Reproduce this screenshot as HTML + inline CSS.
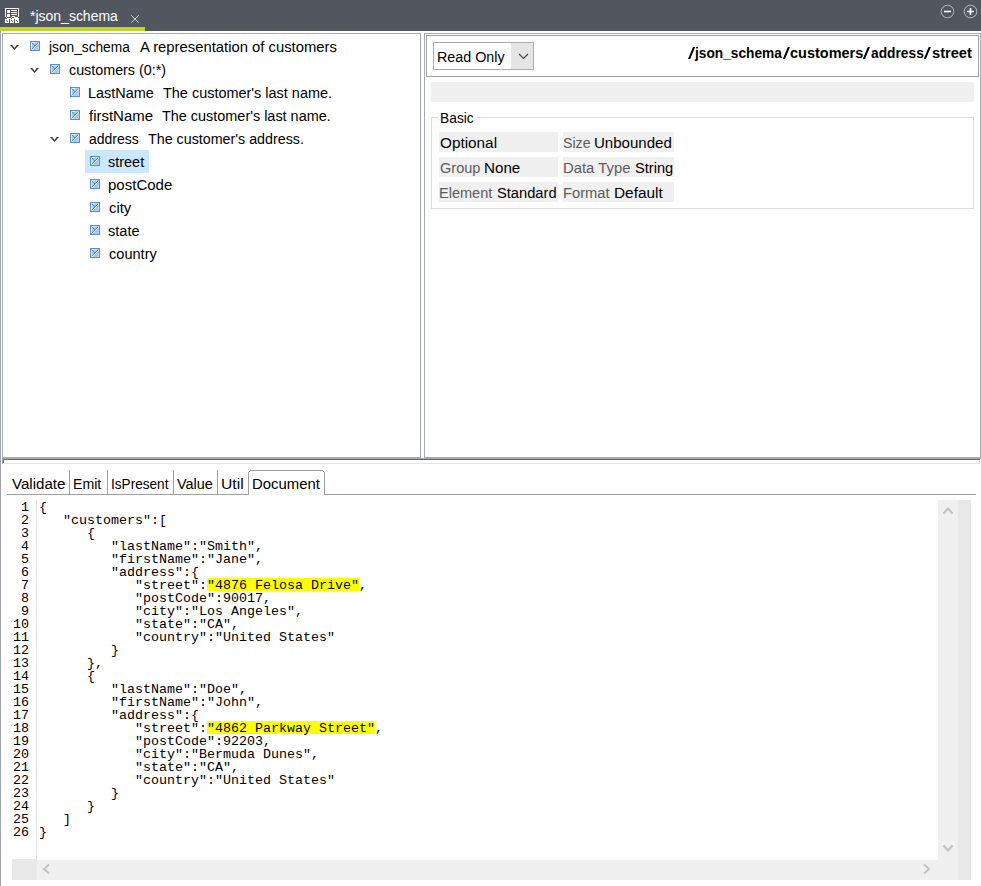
<!DOCTYPE html>
<html><head><meta charset="utf-8"><style>
html,body{margin:0;padding:0;width:981px;height:886px;overflow:hidden;background:#fff}
.b{position:absolute;box-sizing:border-box}
.t{position:absolute;white-space:pre;font-family:'Liberation Sans', sans-serif;line-height:20px;transform-origin:0 0}
.m{position:absolute;margin:0;font-family:'Liberation Mono',monospace;font-size:13.333px;line-height:13px;color:#000}
.hl{-webkit-text-stroke-color:#ff0}
</style></head><body>
<svg width="0" height="0" style="position:absolute"><defs><g id="ic"><path fill="#5e8ecb" d="M0 0h1v1h-1zM1 0h1v1h-1zM2 0h1v1h-1zM3 0h1v1h-1zM4 0h1v1h-1zM5 0h1v1h-1zM6 0h1v1h-1zM7 0h1v1h-1zM8 0h1v1h-1zM9 0h1v1h-1zM0 1h1v1h-1zM9 1h1v1h-1zM0 2h1v1h-1zM9 2h1v1h-1zM0 3h1v1h-1zM9 3h1v1h-1zM0 4h1v1h-1zM9 4h1v1h-1zM0 5h1v1h-1zM9 5h1v1h-1zM0 6h1v1h-1zM9 6h1v1h-1zM0 7h1v1h-1zM9 7h1v1h-1zM0 8h1v1h-1zM9 8h1v1h-1zM0 9h1v1h-1zM1 9h1v1h-1zM2 9h1v1h-1zM3 9h1v1h-1zM4 9h1v1h-1zM5 9h1v1h-1zM6 9h1v1h-1zM7 9h1v1h-1zM8 9h1v1h-1zM9 9h1v1h-1z"/><path fill="#9fcbfa" d="M1 1h1v1h-1zM8 1h1v1h-1zM3 2h1v1h-1zM4 2h1v1h-1zM5 2h1v1h-1zM2 3h1v1h-1zM4 3h1v1h-1zM2 4h1v1h-1zM3 4h1v1h-1zM7 4h1v1h-1zM2 5h1v1h-1zM6 5h1v1h-1zM7 5h1v1h-1zM5 6h1v1h-1zM6 6h1v1h-1zM7 6h1v1h-1zM4 7h1v1h-1zM5 7h1v1h-1zM6 7h1v1h-1zM7 7h1v1h-1zM1 8h1v1h-1z"/><path fill="#c8fbf6" d="M2 1h1v1h-1zM3 1h1v1h-1zM4 1h1v1h-1zM1 2h1v1h-1zM1 3h1v1h-1zM1 4h1v1h-1zM1 5h1v1h-1zM1 6h1v1h-1zM1 7h1v1h-1z"/><path fill="#d2c6f8" d="M5 1h1v1h-1zM6 1h1v1h-1zM8 3h1v1h-1zM8 4h1v1h-1zM8 5h1v1h-1zM8 6h1v1h-1zM8 7h1v1h-1zM8 8h1v1h-1z"/><path fill="#a6d4c8" d="M7 1h1v1h-1zM6 2h1v1h-1zM5 3h1v1h-1zM3 5h1v1h-1zM2 6h1v1h-1zM3 8h1v1h-1zM4 8h1v1h-1zM5 8h1v1h-1zM6 8h1v1h-1zM7 8h1v1h-1z"/><path fill="#5a87c6" d="M2 2h1v1h-1zM7 2h1v1h-1zM3 3h1v1h-1zM6 3h1v1h-1zM4 4h1v1h-1zM5 4h1v1h-1zM4 5h1v1h-1zM3 6h1v1h-1zM2 7h1v1h-1z"/><path fill="#d6fffb" d="M8 2h1v1h-1zM7 3h1v1h-1zM6 4h1v1h-1zM5 5h1v1h-1zM4 6h1v1h-1zM3 7h1v1h-1zM2 8h1v1h-1z"/></g></defs></svg>
<div class="b" style="left:0px;top:0px;width:981px;height:31px;background:#52565f;"></div>
<div class="b" style="left:0px;top:27px;width:145px;height:4px;background:#bdd52b;"></div>
<svg class="b" style="left:5px;top:8px" width="14" height="15" shape-rendering="crispEdges"><path fill="#fff" d="M0 0h1v1h-1zM1 0h1v1h-1zM2 0h1v1h-1zM3 0h1v1h-1zM4 0h1v1h-1zM5 0h1v1h-1zM6 0h1v1h-1zM7 0h1v1h-1zM8 0h1v1h-1zM9 0h1v1h-1zM10 0h1v1h-1zM11 0h1v1h-1zM12 0h1v1h-1zM13 0h1v1h-1zM0 1h1v1h-1zM13 1h1v1h-1zM0 2h1v1h-1zM2 2h1v1h-1zM3 2h1v1h-1zM4 2h1v1h-1zM6 2h1v1h-1zM7 2h1v1h-1zM8 2h1v1h-1zM9 2h1v1h-1zM10 2h1v1h-1zM11 2h1v1h-1zM13 2h1v1h-1zM0 3h1v1h-1zM2 3h1v1h-1zM3 3h1v1h-1zM4 3h1v1h-1zM13 3h1v1h-1zM0 4h1v1h-1zM2 4h1v1h-1zM3 4h1v1h-1zM4 4h1v1h-1zM6 4h1v1h-1zM7 4h1v1h-1zM8 4h1v1h-1zM9 4h1v1h-1zM10 4h1v1h-1zM11 4h1v1h-1zM13 4h1v1h-1zM0 5h1v1h-1zM13 5h1v1h-1zM0 6h1v1h-1zM2 6h1v1h-1zM3 6h1v1h-1zM4 6h1v1h-1zM6 6h1v1h-1zM7 6h1v1h-1zM8 6h1v1h-1zM9 6h1v1h-1zM10 6h1v1h-1zM11 6h1v1h-1zM13 6h1v1h-1zM0 7h1v1h-1zM2 7h1v1h-1zM3 7h1v1h-1zM4 7h1v1h-1zM13 7h1v1h-1zM0 8h1v1h-1zM2 8h1v1h-1zM3 8h1v1h-1zM4 8h1v1h-1zM7 8h1v1h-1zM8 8h1v1h-1zM9 8h1v1h-1zM13 8h1v1h-1zM1 9h1v1h-1zM6 9h1v1h-1zM9 9h1v1h-1zM10 9h1v1h-1zM11 9h1v1h-1zM12 9h1v1h-1zM2 10h1v1h-1zM3 10h1v1h-1zM4 10h1v1h-1zM5 10h1v1h-1zM7 10h1v1h-1zM8 10h1v1h-1zM9 10h1v1h-1zM10 10h1v1h-1zM11 10h1v1h-1zM12 10h1v1h-1zM13 10h1v1h-1zM0 11h1v1h-1zM1 11h1v1h-1zM2 11h1v1h-1zM3 11h1v1h-1zM5 11h1v1h-1zM6 11h1v1h-1zM7 11h1v1h-1zM8 11h1v1h-1zM10 11h1v1h-1zM11 11h1v1h-1zM12 11h1v1h-1zM13 11h1v1h-1zM0 12h1v1h-1zM2 12h1v1h-1zM3 12h1v1h-1zM5 12h1v1h-1zM7 12h1v1h-1zM8 12h1v1h-1zM10 12h1v1h-1zM12 12h1v1h-1zM13 12h1v1h-1zM0 13h1v1h-1zM1 13h1v1h-1zM3 13h1v1h-1zM5 13h1v1h-1zM6 13h1v1h-1zM8 13h1v1h-1zM10 13h1v1h-1zM11 13h1v1h-1zM13 13h1v1h-1zM0 14h1v1h-1zM1 14h1v1h-1zM2 14h1v1h-1zM3 14h1v1h-1zM5 14h1v1h-1zM6 14h1v1h-1zM7 14h1v1h-1zM8 14h1v1h-1zM10 14h1v1h-1zM11 14h1v1h-1zM12 14h1v1h-1zM13 14h1v1h-1z"/></svg>
<svg class="b" style="left:130px;top:14px" width="10" height="10" viewBox="0 0 10 10"><path d="M1.3 1.3L8.7 8.7M8.7 1.3L1.3 8.7" stroke="#d0d1d3" stroke-width="1"/></svg>
<svg class="b" style="left:938px;top:2px" width="43" height="20" viewBox="0 0 43 20">
<circle cx="9.5" cy="9.5" r="6.3" fill="none" stroke="#b9bbbf" stroke-width="1"/>
<path d="M6 9.5h7" stroke="#fff" stroke-width="1.6"/>
<circle cx="32.5" cy="9.5" r="6.3" fill="none" stroke="#b9bbbf" stroke-width="1"/>
<path d="M29 9.5h7M32.5 6v7" stroke="#fff" stroke-width="1.6"/>
</svg>
<div class="b" style="left:0px;top:31px;width:1px;height:855px;background:#a0a3a8;"></div>
<div class="b" style="left:2px;top:33px;width:419px;height:425px;box-shadow:inset 0 0 0 1px #a8abb0;"></div>
<div class="b" style="left:424px;top:33px;width:557px;height:425px;box-shadow:inset 0 0 0 1px #a8abb0;"></div>
<div class="b" style="left:426px;top:35px;width:553px;height:42px;box-shadow:inset 0 0 0 1px #a0a0a0;"></div>
<div class="b" style="left:433px;top:42px;width:101px;height:28px;background:#fff;box-shadow:inset 0 0 0 1px #adadad;"></div>
<div class="b" style="left:511px;top:43px;width:22px;height:26px;background:#e5e5e5;"></div>
<svg class="b" style="left:518px;top:53px" width="11" height="7" viewBox="0 0 11 7"><path d="M1 1l4.5 4.5L10 1" fill="none" stroke="#404040" stroke-width="1.1"/></svg>
<svg class="b" style="left:680px;top:0px" width="300" height="70"><path fill="#000" d="M8.0 59H10.2L15.2 47H13.0ZM102.8 59H105.0L110.0 47H107.8ZM182.8 59H185.0L190.0 47H187.8ZM243.7 59H245.9L250.9 47H248.7Z"/></svg>
<div class="b" style="left:431px;top:82px;width:543px;height:20px;background:#f0f0f0;"></div>
<div class="b" style="left:431px;top:117px;width:543px;height:92px;box-shadow:inset 0 0 0 1px #dcdcdc;"></div>
<div class="b" style="left:438px;top:112px;width:39px;height:9px;background:#fff;"></div>
<div class="b" style="left:439px;top:132px;width:119px;height:20px;background:#f0f0f0;"></div>
<div class="b" style="left:563px;top:132px;width:111px;height:20px;background:#f0f0f0;"></div>
<div class="b" style="left:439px;top:157px;width:119px;height:20px;background:#f0f0f0;"></div>
<div class="b" style="left:563px;top:157px;width:111px;height:20px;background:#f0f0f0;"></div>
<div class="b" style="left:439px;top:182px;width:119px;height:20px;background:#f0f0f0;"></div>
<div class="b" style="left:563px;top:182px;width:111px;height:20px;background:#f0f0f0;"></div>
<div class="b" style="left:85px;top:150px;width:64px;height:23px;background:#cce8ff;"></div>
<svg class="b" style="left:30px;top:41px" width="10" height="10" shape-rendering="crispEdges"><use href="#ic"/></svg>
<svg class="b" style="left:10px;top:45px" width="9" height="5" viewBox="0 0 9 5"><path d="M0 0H2.3L4.5 2.9L6.7 0H9L4.5 5Z" fill="#3c3c3c"/></svg>
<svg class="b" style="left:50px;top:64px" width="10" height="10" shape-rendering="crispEdges"><use href="#ic"/></svg>
<svg class="b" style="left:30px;top:68px" width="9" height="5" viewBox="0 0 9 5"><path d="M0 0H2.3L4.5 2.9L6.7 0H9L4.5 5Z" fill="#3c3c3c"/></svg>
<svg class="b" style="left:70px;top:87px" width="10" height="10" shape-rendering="crispEdges"><use href="#ic"/></svg>
<svg class="b" style="left:70px;top:110px" width="10" height="10" shape-rendering="crispEdges"><use href="#ic"/></svg>
<svg class="b" style="left:70px;top:133px" width="10" height="10" shape-rendering="crispEdges"><use href="#ic"/></svg>
<svg class="b" style="left:50px;top:137px" width="9" height="5" viewBox="0 0 9 5"><path d="M0 0H2.3L4.5 2.9L6.7 0H9L4.5 5Z" fill="#3c3c3c"/></svg>
<svg class="b" style="left:90px;top:156px" width="10" height="10" shape-rendering="crispEdges"><use href="#ic"/></svg>
<svg class="b" style="left:90px;top:179px" width="10" height="10" shape-rendering="crispEdges"><use href="#ic"/></svg>
<svg class="b" style="left:90px;top:202px" width="10" height="10" shape-rendering="crispEdges"><use href="#ic"/></svg>
<svg class="b" style="left:90px;top:225px" width="10" height="10" shape-rendering="crispEdges"><use href="#ic"/></svg>
<svg class="b" style="left:90px;top:248px" width="10" height="10" shape-rendering="crispEdges"><use href="#ic"/></svg>
<div class="b" style="left:2px;top:458px;width:979px;height:1px;background:#a5a6aa;"></div>
<div class="b" style="left:3px;top:459px;width:977px;height:1px;background:#6a6a6a;"></div>
<div class="b" style="left:2px;top:458px;width:1px;height:6px;background:#a8abb0;"></div>
<div class="b" style="left:3px;top:459px;width:1px;height:4px;background:#6a6a6a;"></div>
<div class="b" style="left:4px;top:463px;width:976px;height:1px;background:#e3e3e3;"></div>
<div class="b" style="left:979px;top:460px;width:1px;height:4px;background:#e3e3e3;"></div>
<div class="b" style="left:69px;top:470px;width:1px;height:24px;background:#a0a0a0;"></div>
<div class="b" style="left:107px;top:470px;width:1px;height:24px;background:#a0a0a0;"></div>
<div class="b" style="left:173px;top:470px;width:1px;height:24px;background:#a0a0a0;"></div>
<div class="b" style="left:217px;top:470px;width:1px;height:24px;background:#a0a0a0;"></div>
<div class="b" style="left:7px;top:494px;width:241px;height:1px;background:#a0a0a0;"></div>
<div class="b" style="left:325px;top:494px;width:651px;height:1px;background:#a0a0a0;"></div>
<svg class="b" style="left:248px;top:470px" width="77" height="25" shape-rendering="crispEdges"><path fill="#a0a0a0" d="M2 0h73v1h-73zM1 1h1v1h-1zM75 1h1v1h-1zM0 2h1v23h-1zM76 2h1v23h-1z"/></svg>
<div class="b" style="left:36px;top:500px;width:1px;height:360px;background:#e4e4e4;"></div>
<div class="b" style="left:207px;top:578px;width:152px;height:13px;background:#ffff00;"></div>
<div class="b" style="left:207px;top:721px;width:168px;height:13px;background:#ffff00;"></div>
<pre class="m" style="left:13px;top:501px"> 1
 2
 3
 4
 5
 6
 7
 8
 9
10
11
12
13
14
15
16
17
18
19
20
21
22
23
24
25
26</pre>
<pre class="m" style="left:39px;top:501px">{
   "customers":[
      {
         "lastName":"Smith",
         "firstName":"Jane",
         "address":{
            "street":<span class="hl">"4876 Felosa Drive"</span>,
            "postCode":90017,
            "city":"Los Angeles",
            "state":"CA",
            "country":"United States"
         }
      },
      {
         "lastName":"Doe",
         "firstName":"John",
         "address":{
            "street":<span class="hl">"4862 Parkway Street"</span>,
            "postCode":92203,
            "city":"Bermuda Dunes",
            "state":"CA",
            "country":"United States"
         }
      }
   ]
}</pre>
<div class="b" style="left:938px;top:500px;width:33px;height:380px;background:#f0f0f0;"></div>
<div class="b" style="left:958px;top:500px;width:13px;height:380px;background:#e8e8e8;"></div>
<div class="b" style="left:37px;top:860px;width:921px;height:20px;background:#f0f0f0;"></div>
<div class="b" style="left:12px;top:859px;width:25px;height:21px;background:#e8e8e8;"></div>
<svg class="b" style="left:942px;top:505px" width="12" height="11"><path d="M1.5 8.5l4.5-5 4.5 5" fill="none" stroke="#c2c2c2" stroke-width="2"/></svg>
<svg class="b" style="left:942px;top:843px" width="12" height="11"><path d="M1.5 2.5l4.5 5 4.5-5" fill="none" stroke="#c2c2c2" stroke-width="2"/></svg>
<svg class="b" style="left:41px;top:863px" width="11" height="13"><path d="M8 1.5l-5 4.5 5 4.5" fill="none" stroke="#c2c2c2" stroke-width="2"/></svg>
<svg class="b" style="left:921px;top:863px" width="11" height="13"><path d="M3 1.5l5 4.5-5 4.5" fill="none" stroke="#c2c2c2" stroke-width="2"/></svg>
<div class="t" style="left:29.70px;top:6px;font-weight:normal;color:#ffffff;font-size:15.5px;transform:scaleX(0.9024)">*json_schema</div>
<div class="t" style="left:49.08px;top:37px;font-weight:normal;color:#000;font-size:15.5px;transform:scaleX(0.8845)">json_schema</div>
<div class="t" style="left:139.50px;top:37px;font-weight:normal;color:#000;font-size:15.5px;transform:scaleX(0.9560)">A representation of customers</div>
<div class="t" style="left:68.50px;top:60px;font-weight:normal;color:#000;font-size:15.5px;transform:scaleX(0.9236)">customers (0:*)</div>
<div class="t" style="left:87.57px;top:83px;font-weight:normal;color:#000;font-size:15.5px;transform:scaleX(0.9316)">LastName</div>
<div class="t" style="left:162.70px;top:83px;font-weight:normal;color:#000;font-size:15.5px;transform:scaleX(0.9324)">The customer's last name.</div>
<div class="t" style="left:88.50px;top:106px;font-weight:normal;color:#000;font-size:15.5px;transform:scaleX(0.9651)">firstName</div>
<div class="t" style="left:162.20px;top:106px;font-weight:normal;color:#000;font-size:15.5px;transform:scaleX(0.9307)">The customer's last name.</div>
<div class="t" style="left:88.50px;top:129px;font-weight:normal;color:#000;font-size:15.5px;transform:scaleX(0.9026)">address</div>
<div class="t" style="left:147.90px;top:129px;font-weight:normal;color:#000;font-size:15.5px;transform:scaleX(0.9213)">The customer's address.</div>
<div class="t" style="left:108.00px;top:152px;font-weight:normal;color:#000;font-size:15.5px;transform:scaleX(0.9326)">street</div>
<div class="t" style="left:107.53px;top:175px;font-weight:normal;color:#000;font-size:15.5px;transform:scaleX(0.9686)">postCode</div>
<div class="t" style="left:108.50px;top:198px;font-weight:normal;color:#000;font-size:15.5px;transform:scaleX(0.9532)">city</div>
<div class="t" style="left:108.00px;top:221px;font-weight:normal;color:#000;font-size:15.5px;transform:scaleX(0.9399)">state</div>
<div class="t" style="left:108.50px;top:244px;font-weight:normal;color:#000;font-size:15.5px;transform:scaleX(0.9397)">country</div>
<div class="t" style="left:436.68px;top:47px;font-weight:normal;color:#000;font-size:15.5px;transform:scaleX(0.9230)">Read Only</div>
<div class="t" style="left:694.88px;top:43px;font-weight:bold;color:#000;font-size:15.5px;transform:scaleX(0.8846)">json_schema</div>
<div class="t" style="left:790.40px;top:43px;font-weight:bold;color:#000;font-size:15.5px;transform:scaleX(0.9348)">customers</div>
<div class="t" style="left:871.00px;top:43px;font-weight:bold;color:#000;font-size:15.5px;transform:scaleX(0.8890)">address</div>
<div class="t" style="left:931.50px;top:43px;font-weight:bold;color:#000;font-size:15.5px;transform:scaleX(0.9440)">street</div>
<div class="t" style="left:439.71px;top:108px;font-weight:normal;color:#000;font-size:15.5px;transform:scaleX(0.8909)">Basic</div>
<div class="t" style="left:439.60px;top:133px;font-weight:normal;color:#000;font-size:15.5px;transform:scaleX(0.9880)">Optional</div>
<div class="t" style="left:439.60px;top:158px;font-weight:normal;color:#5c5c5c;font-size:15.5px;transform:scaleX(0.9374)">Group</div>
<div class="t" style="left:483.72px;top:158px;font-weight:normal;color:#000;font-size:15.5px;transform:scaleX(0.9793)">None</div>
<div class="t" style="left:438.66px;top:183px;font-weight:normal;color:#5c5c5c;font-size:15.5px;transform:scaleX(0.9371)">Element</div>
<div class="t" style="left:497.30px;top:183px;font-weight:normal;color:#000;font-size:15.5px;transform:scaleX(0.9472)">Standard</div>
<div class="t" style="left:562.80px;top:133px;font-weight:normal;color:#5c5c5c;font-size:15.5px;transform:scaleX(0.9143)">Size</div>
<div class="t" style="left:594.23px;top:133px;font-weight:normal;color:#000;font-size:15.5px;transform:scaleX(0.9715)">Unbounded</div>
<div class="t" style="left:562.54px;top:158px;font-weight:normal;color:#5c5c5c;font-size:15.5px;transform:scaleX(0.9576)">Data Type</div>
<div class="t" style="left:634.60px;top:158px;font-weight:normal;color:#000;font-size:15.5px;transform:scaleX(0.9431)">String</div>
<div class="t" style="left:562.55px;top:183px;font-weight:normal;color:#5c5c5c;font-size:15.5px;transform:scaleX(0.9471)">Format</div>
<div class="t" style="left:614.01px;top:183px;font-weight:normal;color:#000;font-size:15.5px;transform:scaleX(0.9917)">Default</div>
<div class="t" style="left:11.60px;top:474px;font-weight:normal;color:#000;font-size:15.5px;transform:scaleX(0.9734)">Validate</div>
<div class="t" style="left:73.09px;top:474px;font-weight:normal;color:#000;font-size:15.5px;transform:scaleX(0.9122)">Emit</div>
<div class="t" style="left:110.72px;top:474px;font-weight:normal;color:#000;font-size:15.5px;transform:scaleX(0.8777)">IsPresent</div>
<div class="t" style="left:176.90px;top:474px;font-weight:normal;color:#000;font-size:15.5px;transform:scaleX(0.9294)">Value</div>
<div class="t" style="left:220.59px;top:474px;font-weight:normal;color:#000;font-size:15.5px;transform:scaleX(1.0122)">Util</div>
<div class="t" style="left:251.84px;top:474px;font-weight:normal;color:#000;font-size:15.5px;transform:scaleX(0.9611)">Document</div>
</body></html>
